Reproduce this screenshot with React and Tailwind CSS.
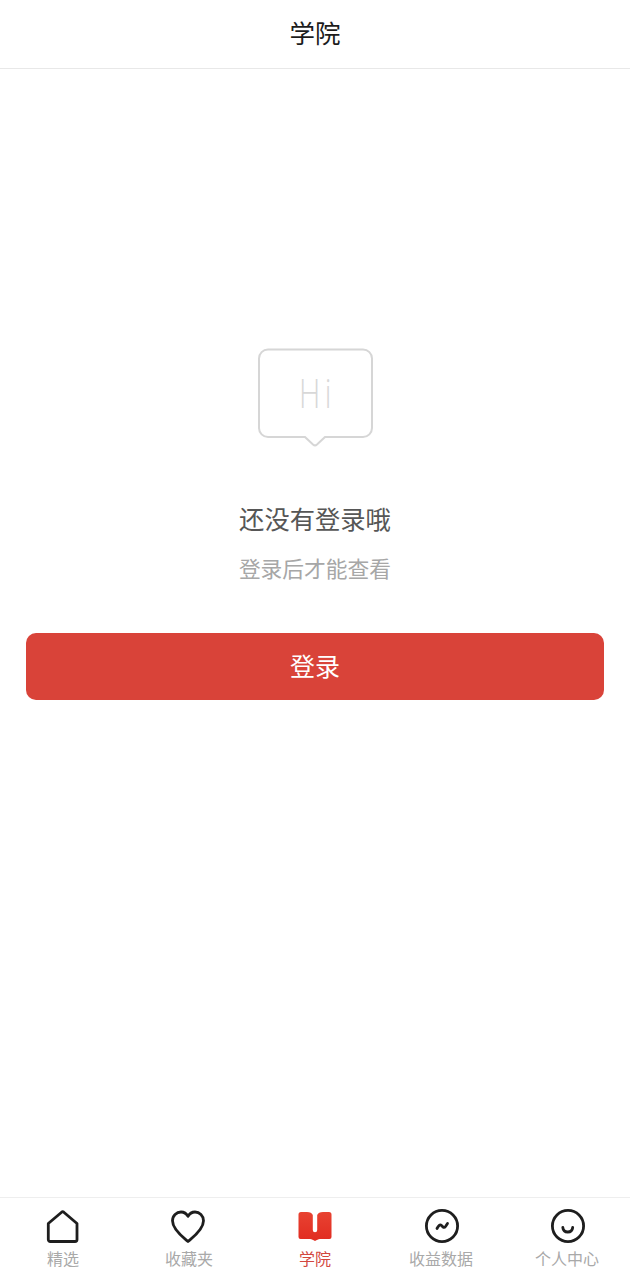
const cjk = { fontFamily: '"Noto Sans CJK SC", "Liberation Sans", sans-serif' };

function HomeIcon() {
  return (
    <svg width="34" height="34" viewBox="0 0 34 34" fill="none" stroke="#1c1c1c" strokeWidth="2.8" strokeLinejoin="round">
      <path d="M2.3 13.5 L15.6 2.2 a1.8 1.8 0 0 1 2.2 0 L31 13.5 V29.5 a2 2 0 0 1 -2 2 H4.3 a2 2 0 0 1 -2 -2 Z" />
    </svg>
  );
}

function HeartIcon() {
  return (
    <svg width="36" height="34" viewBox="0 0 36 34" fill="none" stroke="#1c1c1c" strokeWidth="2.8" strokeLinejoin="round">
      <path d="M17 31.5 C13 28 1.5 20 1.5 10.8 C1.5 5.5 5.5 2 10 2 C13 2 15.5 3.6 17 6.4 C18.5 3.6 21 2 24 2 C28.5 2 32.5 5.5 32.5 10.8 C32.5 20 21 28 17 31.5 Z" />
    </svg>
  );
}

function BookIcon() {
  return (
    <svg width="34" height="32" viewBox="0 0 34 32">
      <defs>
        <linearGradient id="bookFill" x1="0" y1="0" x2="0" y2="1">
          <stop offset="0" stopColor="#e8402f" />
          <stop offset="1" stopColor="#e12a1f" />
        </linearGradient>
      </defs>
      <path d="M3 1 H9 C12 1 14 2 14.8 4 V19 a2.2 2.2 0 0 0 4.4 0 V4 C20 2 22 1 25 1 H31 a2.5 2.5 0 0 1 2.5 2.5 V26 a2 2 0 0 1 -2 2 H22 C20 28 19 29 17 30 C15 29 14 28 12 28 H2.5 a2 2 0 0 1 -2 -2 V3.5 A2.5 2.5 0 0 1 3 1 Z" fill="url(#bookFill)" />
    </svg>
  );
}

function ChartIcon() {
  return (
    <svg width="38" height="38" viewBox="0 0 38 38" fill="none" stroke="#1c1c1c" strokeWidth="2.8" strokeLinecap="round" strokeLinejoin="round">
      <circle cx="20" cy="18" r="15.6" />
      <path d="M15 20.5 C16.5 17.5 18 16 19.5 17.5 C21 19 22 20.5 23.5 18.5 L25.5 15.5" />
    </svg>
  );
}

function SmileIcon() {
  return (
    <svg width="38" height="38" viewBox="0 0 38 38" fill="none" stroke="#1c1c1c" strokeWidth="2.8" strokeLinecap="round">
      <circle cx="20" cy="18" r="15.6" />
      <path d="M14.8 19.5 C15.5 25.5 24 25.5 24.7 19.5" />
    </svg>
  );
}

function SpeechBubble() {
  return (
    <div className="relative h-[100px] w-[116px]">
      <svg width="116" height="100" viewBox="0 0 116 100" fill="none" stroke="#d6d6d6" strokeWidth="2" className="absolute inset-0">
        <path d="M11 1.5 H106 a9 9 0 0 1 9 9 V80 a9 9 0 0 1 -9 9 H68 L60 96.5 a3 3 0 0 1 -4 0 L48 89 H11 a9 9 0 0 1 -9 -9 V10.5 a9 9 0 0 1 9 -9 Z" />
      </svg>
      <span
        className="absolute left-[5px] right-0 top-[18px] scale-x-[0.74] text-center text-[40px] leading-[54px] tracking-[6px] text-[#d8d8d8]"
        style={{ fontFamily: '"Open Sans", sans-serif', fontWeight: 300 }}
      >
        Hi
      </span>
    </div>
  );
}

const tabs = [
  { label: "精选", icon: <HomeIcon /> },
  { label: "收藏夹", icon: <HeartIcon /> },
  { label: "学院", icon: <BookIcon />, active: true },
  { label: "收益数据", icon: <ChartIcon /> },
  { label: "个人中心", icon: <SmileIcon /> },
];

export default function App() {
  return (
    <div className="flex h-[1280px] w-[630px] flex-col bg-white opacity-[0.99]" style={cjk}>
      <header className="flex h-[69px] shrink-0 items-center justify-center border-b border-[#e8e8e8] pb-[4px]">
        <h1 className="text-[25.5px] font-normal leading-none text-[#1a1a1a]">学院</h1>
      </header>

      <main className="flex flex-1 flex-col items-center px-[26px] pt-[279px]">
        <SpeechBubble />
        <p className="mt-[52px] text-[25.3px] leading-[36px] text-[#555555]">还没有登录哦</p>
        <p className="mt-[16px] text-[21.75px] leading-[32px] text-[#a6a6a6]">登录后才能查看</p>
        <button className="mt-[49px] flex h-[67px] w-full items-center justify-center rounded-[10px] bg-[#d94137] pb-[2px] text-[25px] text-white">
          登录
        </button>
      </main>

      <nav className="grid h-[83px] shrink-0 grid-cols-5 border-t border-[#eeeeee]">
        {tabs.map((t) => (
          <div key={t.label} className="flex flex-col items-center pt-[11px]">
            <div className="flex h-[36px] items-center justify-center">{t.icon}</div>
            <span className={`mt-[1px] text-[16px] leading-[24px] ${t.active ? "text-[#d2453d]" : "text-[#a8a8a8]"}`}>
              {t.label}
            </span>
          </div>
        ))}
      </nav>
    </div>
  );
}
